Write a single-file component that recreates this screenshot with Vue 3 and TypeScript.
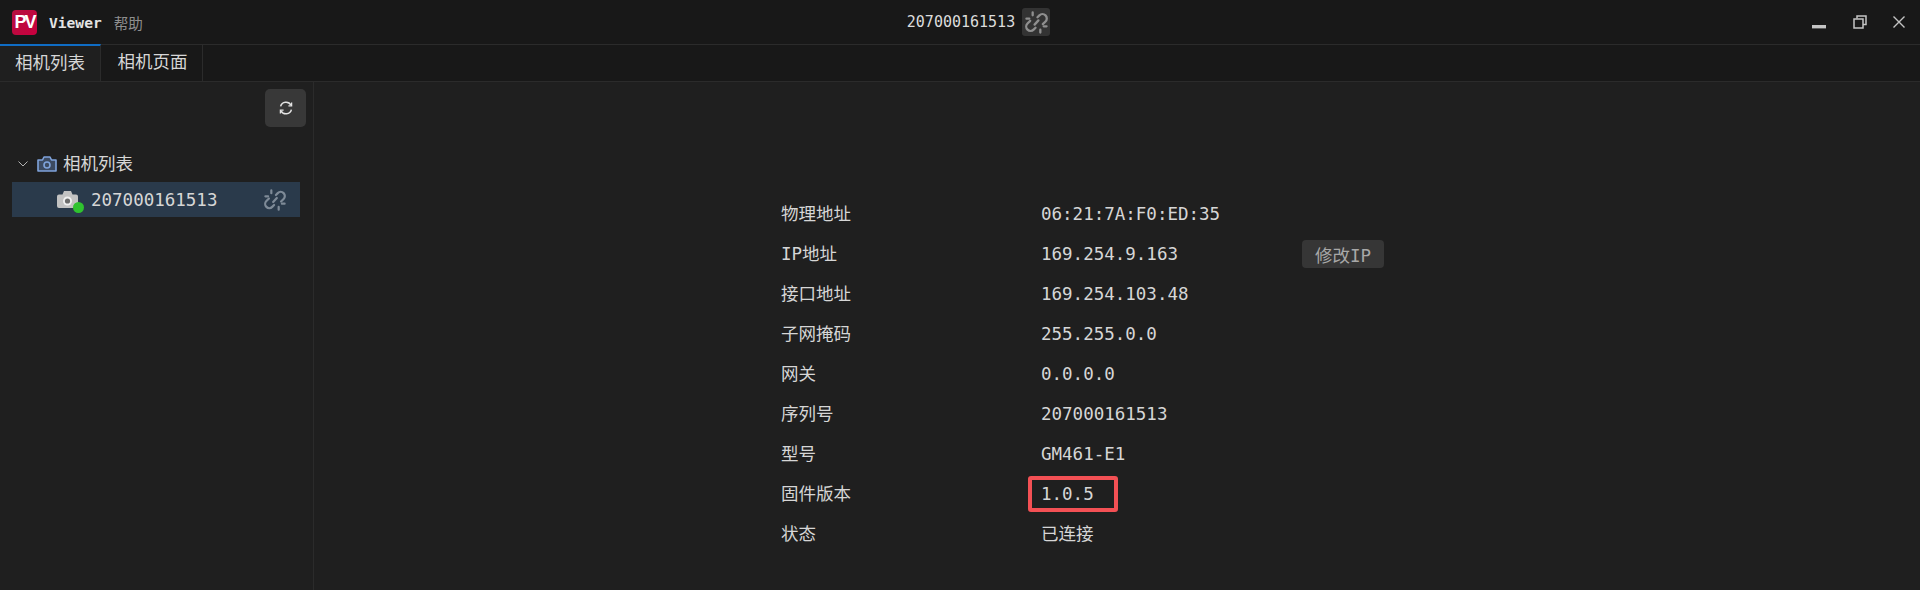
<script setup lang="ts">
interface Row { label: string; value: string; highlight?: boolean; action?: string; cjk?: boolean }
const rows: Row[] = [
  { label: '物理地址', value: '06:21:7A:F0:ED:35' },
  { label: 'IP地址', value: '169.254.9.163', action: '修改IP' },
  { label: '接口地址', value: '169.254.103.48' },
  { label: '子网掩码', value: '255.255.0.0' },
  { label: '网关', value: '0.0.0.0' },
  { label: '序列号', value: '207000161513' },
  { label: '型号', value: 'GM461-E1' },
  { label: '固件版本', value: '1.0.5', highlight: true },
  { label: '状态', value: '已连接', cjk: true },
]
</script>

<template>
  <div class="app">
    <header class="titlebar">
      <div class="brand">
        <span class="logo">PV</span>
        <span class="name">Viewer</span>
        <span class="help">帮助</span>
      </div>
      <div class="center">
        <span class="serial">207000161513</span>
        <button class="link-btn" type="button">
          <svg viewBox="0 0 24 24" width="23" height="23" class="unlink">
            <path d="M13 6.500 15 4.500a4.500 4.500 0 0 1 6.400 6.400l-2.800 2.800" />
            <path d="M11 17.500 9 19.500a4.500 4.500 0 0 1-6.400-6.400l2.800-2.800" />
            <path d="M10 14.200 14 9.800" />
            <path d="M8 1.500v3M1.500 8h3M16 19.500v3M19.500 16h3" />
          </svg>
        </button>
      </div>
      <div class="winctl">
        <svg viewBox="0 0 14 14" width="14" height="14"><rect x="0" y="10" width="14" height="3.400" fill="#c4c4c4" /></svg>
        <svg class="restore" viewBox="0 0 14 14" width="14" height="14" fill="none" stroke="#c4c4c4" stroke-width="1.500">
          <path d="M4 3.500V1h9v8.500h-3" />
          <rect x="1" y="4" width="9" height="9" />
        </svg>
        <svg viewBox="0 0 14 14" width="14" height="14" fill="none" stroke="#c4c4c4" stroke-width="1.400">
          <path d="M1.500 1.500l11 11M12.500 1.500l-11 11" />
        </svg>
      </div>
    </header>

    <nav class="tabs">
      <div class="tab active">相机列表</div>
      <div class="tab">相机页面</div>
    </nav>

    <div class="body">
      <aside class="side">
        <div class="side-tools">
          <button class="refresh" type="button">
            <svg viewBox="0 0 16 16" width="16" height="16" fill="none" stroke="#e4e4e4" stroke-width="1.500">
              <path d="M2.600 6.400A5.600 5.600 0 0 1 13 5.200" />
              <path d="M13.400 9.600A5.600 5.600 0 0 1 3 10.800" />
              <path d="M13.600 2.400v3.400h-3.200M2.400 13.600v-3.400h3.200" stroke-width="1.300" />
            </svg>
          </button>
        </div>
        <div class="tree-root">
          <svg class="chev" viewBox="0 0 10 6" width="10" height="6" fill="none" stroke="#b4b4b4" stroke-width="1">
            <path d="M.5.500 5 5 9.500.500" />
          </svg>
          <svg viewBox="0 0 20 16" width="20" height="16" fill="#3c4a60" stroke="#7fa3db" stroke-width="1.600">
            <path d="M1 4h4.500l1.500-3h6l1.500 3H19v11H1z" stroke-linejoin="round" />
            <circle cx="10" cy="9" r="3" fill="none" />
          </svg>
          <span>相机列表</span>
        </div>
        <div class="tree-item">
          <span class="cam">
            <svg viewBox="0 0 21 17" width="21" height="17">
              <path fill="#c2c2c2" d="M2 3.500h3.500L7 0h7l1.500 3.500H19a2 2 0 0 1 2 2V15a2 2 0 0 1-2 2H2a2 2 0 0 1-2-2V5.500a2 2 0 0 1 2-2z" />
              <circle cx="10.500" cy="10" r="4.500" fill="#f0f0f0" />
              <circle cx="10.500" cy="10" r="2.600" fill="#6c6c6c" />
            </svg>
            <i class="dot"></i>
          </span>
          <span class="item-text">207000161513</span>
          <svg viewBox="0 0 24 24" width="22" height="22" class="unlink item-link">
            <path d="M13 6.500 15 4.500a4.500 4.500 0 0 1 6.400 6.400l-2.800 2.800" />
            <path d="M11 17.500 9 19.500a4.500 4.500 0 0 1-6.400-6.400l2.800-2.800" />
            <path d="M10 14.200 14 9.800" />
            <path d="M8 1.500v3M1.500 8h3M16 19.500v3M19.500 16h3" />
          </svg>
        </div>
      </aside>

      <main class="main">
        <div class="info">
          <div v-for="r in rows" :key="r.label" class="row">
            <span class="label">{{ r.label }}</span>
            <span class="value" :class="{ hl: r.highlight, cjk: r.cjk }">{{ r.value }}</span>
            <button v-if="r.action" class="action" type="button">{{ r.action }}</button>
          </div>
        </div>
      </main>
    </div>
  </div>
</template>

<style scoped>
.app {
  width: 1920px;
  height: 590px;
  display: flex;
  flex-direction: column;
  background: #1f1f1f;
  color: #d6d6d6;
  font-family: "DejaVu Sans Mono", "Noto Sans CJK SC", monospace;
  font-size: 17.500px;
  overflow: hidden;
}
.titlebar {
  height: 44px;
  flex: none;
  background: #181818;
  border-bottom: 1px solid #2b2b2b;
  display: grid;
  grid-template-columns: 1fr auto 1fr;
  align-items: center;
  box-sizing: content-box;
}
.brand { display: flex; align-items: center; padding-left: 12px; }
.logo {
  width: 25px;
  height: 25px;
  border-radius: 4px;
  background: linear-gradient(135deg, #b4103f, #c9003f);
  color: #fff;
  font: 700 18px/25px "Liberation Sans", sans-serif;
  text-align: center;
  letter-spacing: -2px;
}
.name { margin-left: 12px; font-size: 14.600px; font-weight: 700; color: #e4e4e4; }
.help { margin-left: 12px; font-size: 14.600px; color: #8e8e8e; }
.center { display: flex; align-items: center; gap: 7px; padding-left: 37px; }
.serial { font-size: 15px; color: #dcdcdc; }
.link-btn {
  width: 28px;
  height: 28px;
  border: 0;
  padding: 0;
  border-radius: 3px;
  background: #333;
  display: flex;
  align-items: center;
  justify-content: center;
}
.unlink { fill: none; stroke: #8f8f8f; stroke-width: 2.400; stroke-linecap: round; }
.item-link { stroke: #7e8a97; }
.winctl { display: flex; justify-content: flex-end; gap: 26px; padding-right: 14px; }
.restore { margin: 0 -1px 0 1px; }
.tabs {
  height: 37px;
  flex: none;
  display: flex;
  background: #181818;
  border-bottom: 1px solid #2b2b2b;
  box-sizing: border-box;
}
.tab {
  width: 102px;
  text-align: center;
  line-height: 35px;
  border-right: 1px solid #2b2b2b;
  box-sizing: border-box;
  background: #181818;
  padding-left: 2px;
}
.tab.active {
  width: 101px;
  background: #1f1f1f;
  border-top: 2px solid #0f6cc4;
  margin-top: -1px;
  height: 37px;
  line-height: 34px;
  padding-left: 0;
}
.body { flex: 1; display: flex; min-height: 0; }
.side { width: 313px; flex: none; border-right: 1px solid #2b2b2b; }
.side-tools { display: flex; justify-content: flex-end; padding: 7px 7px 0 0; }
.refresh {
  width: 41px;
  height: 38px;
  border: 0;
  padding: 0;
  border-radius: 5px;
  background: #383838;
  display: flex;
  align-items: center;
  justify-content: center;
}
.tree-root {
  margin-top: 18px;
  height: 37px;
  display: flex;
  align-items: center;
  padding-left: 18px;
}
.chev { margin-right: 9px; }
.tree-root svg + svg { margin-right: 6px; }
.tree-root span { padding-bottom: 2px; }
.tree-item {
  margin-left: 12px;
  width: 288px;
  height: 35px;
  background: #2a3a4b;
  display: flex;
  align-items: center;
  padding-left: 45px;
  padding-right: 14px;
  box-sizing: border-box;
}
.cam { position: relative; display: flex; width: 21px; height: 17px; margin-right: 13px; }
.dot {
  position: absolute;
  right: -6px;
  bottom: -5px;
  width: 11px;
  height: 11px;
  border-radius: 50%;
  background: #2fc22f;
}
.item-text { flex: 1; }
.item-link { flex: none; }
.main { flex: 1; display: flex; justify-content: center; padding-top: 112px; }
.info { width: 672px; }
.row { height: 40px; display: flex; align-items: center; }
.label { width: 260px; flex: none; padding-bottom: 3px; }
.value { width: 261px; flex: none; }
.value.cjk { padding-bottom: 3px; }
.value.hl { position: relative; }
.value.hl::after {
  content: "";
  position: absolute;
  left: -13px;
  top: -8px;
  width: 90px;
  height: 36px;
  box-sizing: border-box;
  border: 4px solid #f35054;
  border-radius: 3px;
}
.action {
  width: 82px;
  height: 28px;
  border: 0;
  padding: 0;
  border-radius: 4px;
  background: #363636;
  color: #a8a8a8;
  font: inherit;
}
</style>
